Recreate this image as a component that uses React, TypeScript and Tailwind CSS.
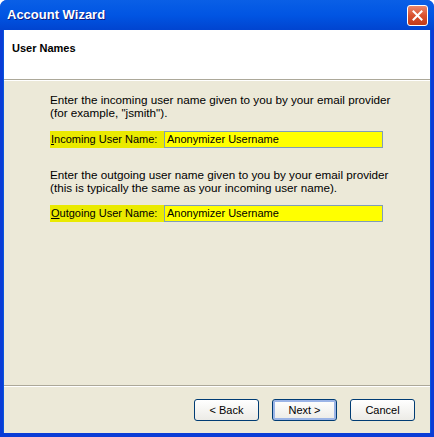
const FONT = "font-['Liberation_Sans',Arial,sans-serif]";

function CloseButton() {
  return (
    <div className="flex h-[21px] w-[21px] items-center justify-center rounded-[3px] border border-white bg-gradient-to-b from-[#e9866b] via-[#d9512f] to-[#c23a17]">
      <svg width="11" height="11" viewBox="0 0 11 11">
        <path d="M1.5 1.5 L9.5 9.5 M9.5 1.5 L1.5 9.5" stroke="white" strokeWidth="2" strokeLinecap="square" />
      </svg>
    </div>
  );
}

function Field({ label, first, value }: { label: string; first: string; value: string }) {
  return (
    <div className="flex h-[17px] items-stretch">
      <div className="flex w-[114px] items-center whitespace-nowrap bg-[#eaea00] pl-[1px] text-[11px] text-black">
        <span className="underline">{first}</span>
        {label}
      </div>
      <div className="flex w-[219px] items-center border border-[#7f9db9] bg-[#ffff00] pl-[2px] text-[11px] text-black">
        {value}
      </div>
    </div>
  );
}

function XpButton({ children, focused }: { children: string; focused?: boolean }) {
  return (
    <button
      className={`flex h-[22px] w-[65px] items-center justify-center rounded-[3px] border border-[#003c74] bg-gradient-to-b from-white to-[#ecebe6] text-[11px] text-black ${
        focused ? "shadow-[inset_0_0_0_2px_#9bb4e6]" : ""
      }`}
    >
      {children}
    </button>
  );
}

export default function App() {
  return (
    <div className={`flex h-[437px] w-[434px] flex-col overflow-hidden rounded-t-[7px] bg-[#0a3cd6] ${FONT}`}>
      <div className="flex h-[30px] shrink-0 items-center justify-between bg-gradient-to-b from-[#0a5fe6] via-[#0155e3] to-[#0144d0] pl-[7px] pr-[6px]">
        <span className="text-[13px] font-bold text-white [text-shadow:1px_1px_0_#0a1a80]">Account Wizard</span>
        <CloseButton />
      </div>
      <div className="mx-[3px] mb-[4px] flex flex-1 flex-col border-l border-r border-[#0855dd] bg-[#ece9d8]">
        <div className="h-[50px] shrink-0 border-b border-[#aca899] bg-white pl-[8px] pt-[10px] leading-[13px]">
          <span className="text-[11px] font-bold text-black">User Names</span>
        </div>
        <div className="flex flex-1 flex-col border-t border-white pl-[46px] pt-[12px] text-[11.7px] leading-[13px] text-black">
          <p>Enter the incoming user name given to you by your email provider</p>
          <p>(for example, "jsmith").</p>
          <div className="mt-[12px]">
            <Field first="I" label="ncoming User Name:" value="Anonymizer Username" />
          </div>
          <p className="mt-[20px]">Enter the outgoing user name given to you by your email provider</p>
          <p>(this is typically the same as your incoming user name).</p>
          <div className="mt-[11px]">
            <Field first="O" label="utgoing User Name:" value="Anonymizer Username" />
          </div>
        </div>
        <div className="flex h-[48px] shrink-0 items-start justify-end gap-[13px] border-t border-[#aca899] pr-[15px] pt-[13px] shadow-[inset_0_1px_0_white]">
          <XpButton>&lt; Back</XpButton>
          <XpButton focused>Next &gt;</XpButton>
          <XpButton>Cancel</XpButton>
        </div>
      </div>
    </div>
  );
}
